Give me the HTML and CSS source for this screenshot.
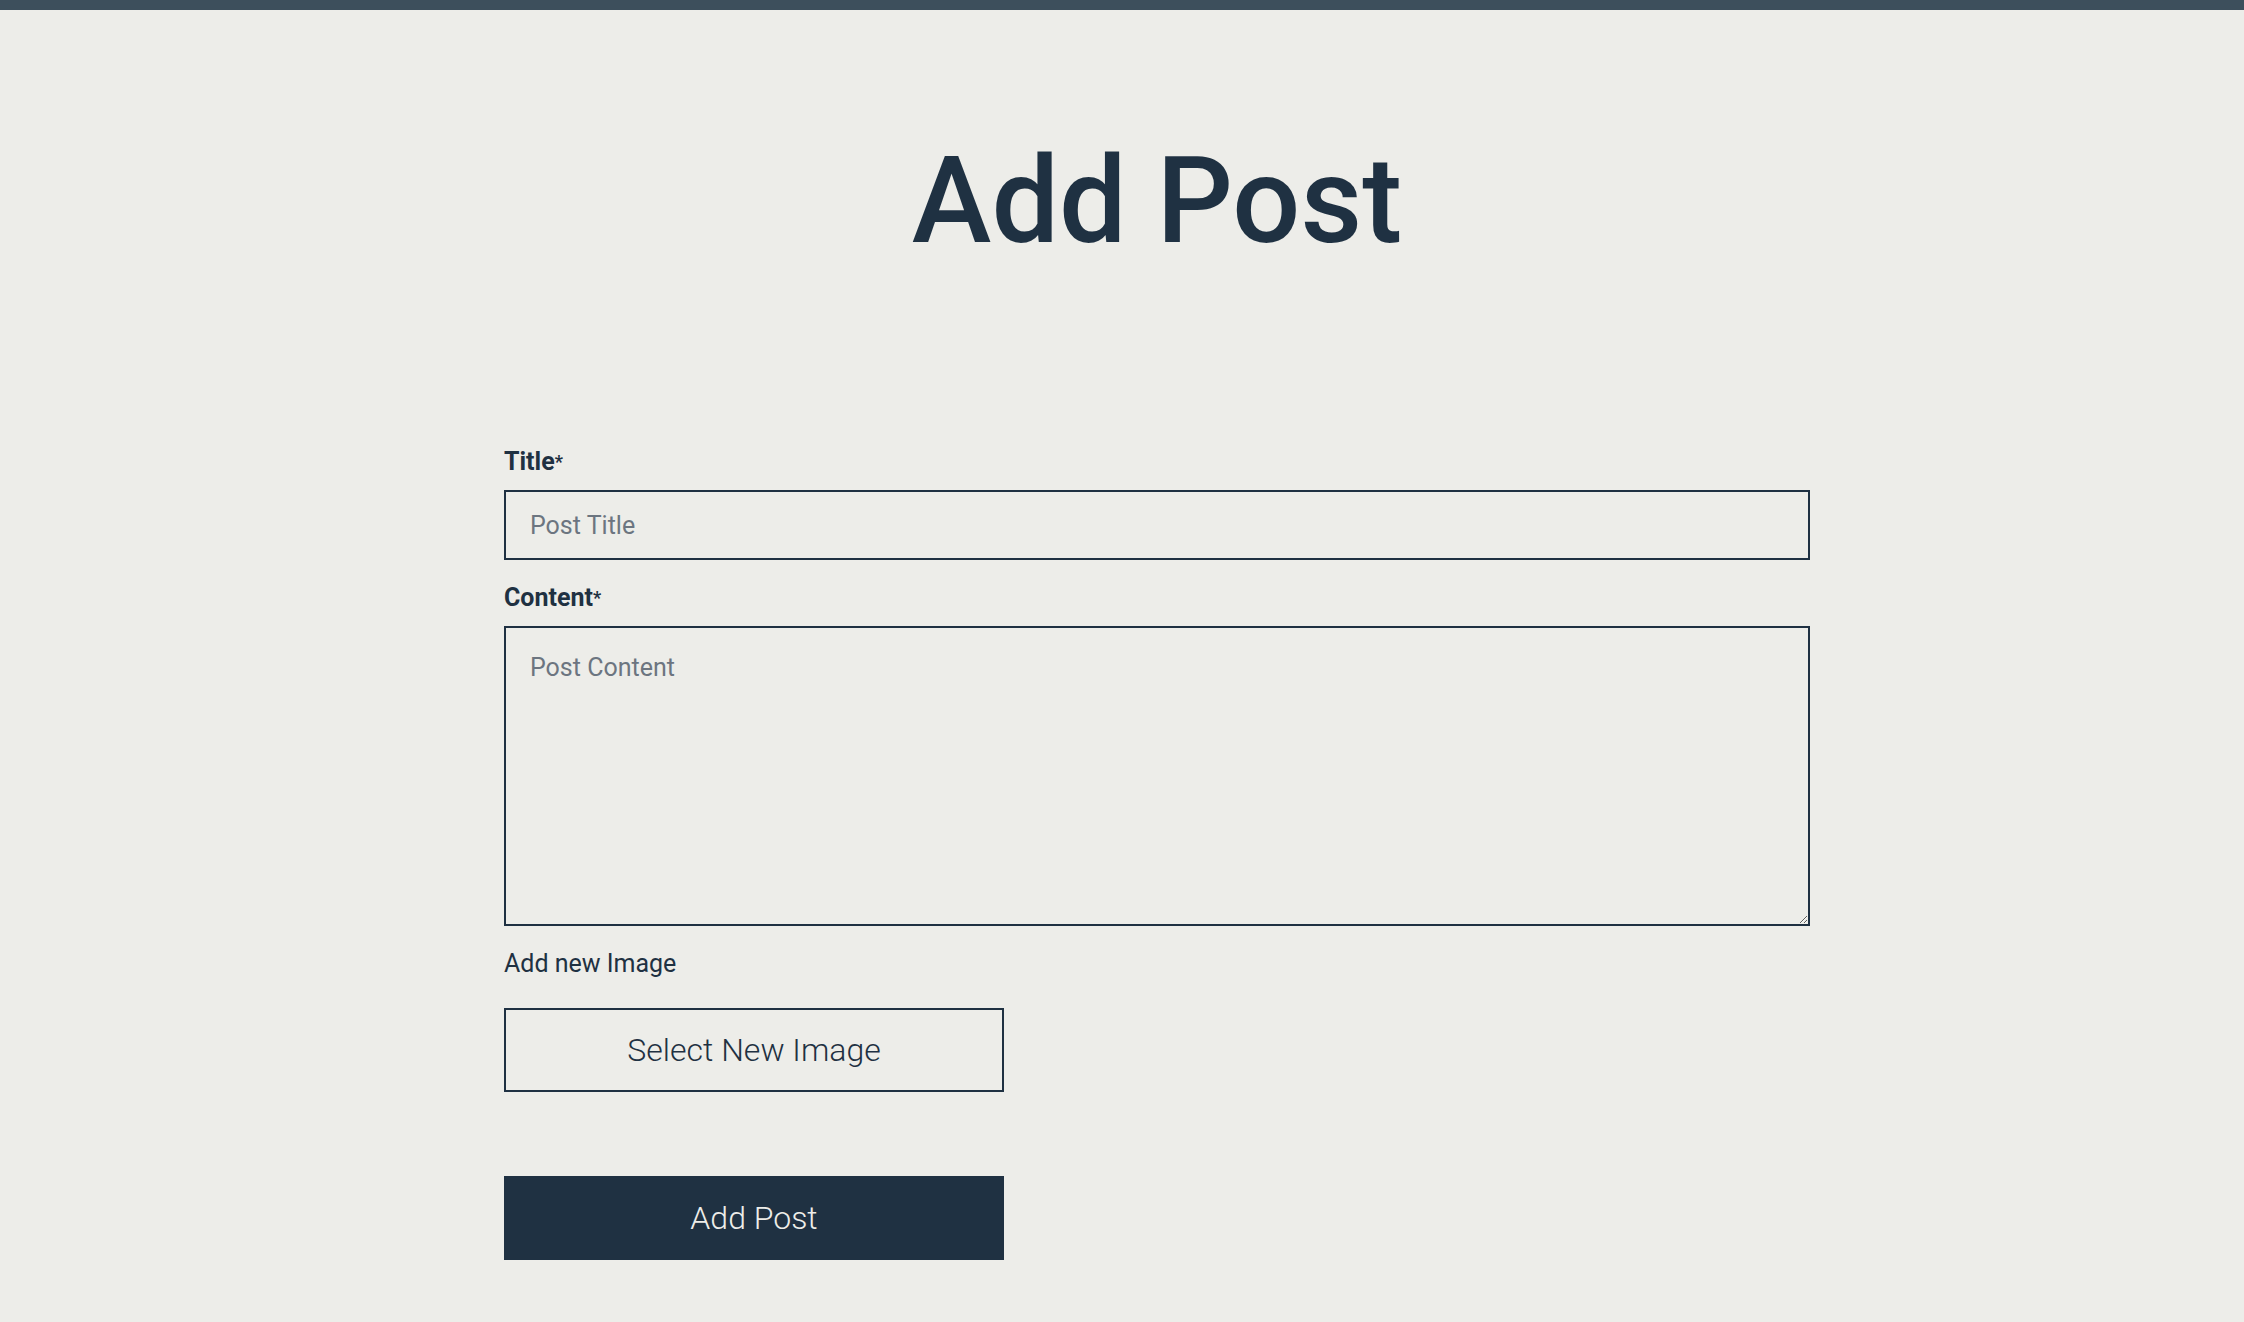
FILE: index.html
```html
<!DOCTYPE html>
<html lang="en">
<head>
<meta charset="utf-8">
<title>Add Post</title>
<link rel="stylesheet" href="styles.css">
</head>
<body>
<div class="topbar"></div>
<main class="page">
  <h1 class="page-title">Add Post</h1>
  <form class="post-form">
    <label class="field-label" for="title">Title<span class="req">*</span></label>
    <input class="field-input" id="title" type="text" placeholder="Post Title">
    <label class="field-label" for="content">Content<span class="req">*</span></label>
    <textarea class="field-textarea" id="content" placeholder="Post Content"></textarea>
    <span class="plain-label">Add new Image</span>
    <button type="button" class="btn btn-outline">Select New Image</button>
    <button type="submit" class="btn btn-solid">Add Post</button>
  </form>
</main>
</body>
</html>
```
FILE: styles.css
```css
* { box-sizing: border-box; }
html, body {
  margin: 0;
  padding: 0;
  background: #edede9;
  font-family: Roboto, "Liberation Sans", sans-serif;
  color: #1f3142;
}
body { min-height: 1322px; }
.topbar {
  height: 10px;
  background: #3d4f5c;
}
.page {
  width: 1306px;
  margin: 0 0 0 504px;
}
.page-title {
  margin: 119px 0 0;
  font-size: 120px;
  line-height: 144px;
  font-weight: 500;
  text-align: center;
  color: #1f3142;
}
.post-form {
  display: flex;
  flex-direction: column;
  align-items: flex-start;
  padding-top: 174px;
}
.field-label {
  display: block;
  height: 30px;
  font-size: 25px;
  line-height: 30px;
  font-weight: 700;
  margin-bottom: 13px;
}
.req {
  font-size: 18px;
  line-height: 0;
  vertical-align: 2px;
}
.field-input,
.field-textarea {
  display: block;
  width: 100%;
  border: 2px solid #1f3142;
  background: #edede9;
  font-family: Roboto, "Liberation Sans", sans-serif;
  font-size: 25px;
  color: #1f3142;
  padding: 0 24px;
  margin: 0 0 23px;
  border-radius: 0;
  outline: none;
}
.field-input { height: 70px; }
.field-textarea {
  height: 300px;
  padding: 25px 24px;
  resize: vertical;
  line-height: normal;
}
.field-input::placeholder,
.field-textarea::placeholder { color: #6c7580; opacity: 1; }
.plain-label {
  display: block;
  font-size: 25px;
  line-height: 30px;
  font-weight: 400;
  margin-bottom: 29px;
}
.btn {
  width: 500px;
  height: 84px;
  font-family: Roboto, "Liberation Sans", sans-serif;
  font-size: 32px;
  font-weight: 300;
  border: 2px solid #1f3142;
  border-radius: 0;
  padding: 0;
  cursor: pointer;
}
.btn-outline {
  background: transparent;
  color: #1f3142;
  margin-bottom: 84px;
}
.btn-solid {
  background: #1f3142;
  color: #edede9;
}
```
